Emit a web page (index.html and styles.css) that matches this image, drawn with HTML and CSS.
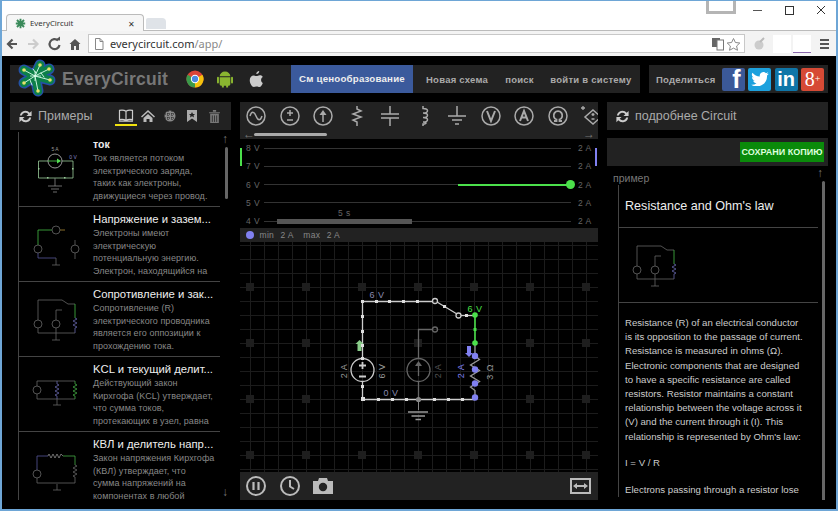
FILE: index.html
```html
<!DOCTYPE html>
<html lang="ru">
<head>
<meta charset="utf-8">
<title>EveryCircuit</title>
<link rel="stylesheet" href="styles.css">
</head>
<body>
<svg class="defs" width="0" height="0">
  <defs>
    <g id="th-current" fill="none" stroke="#888" stroke-width=".8">
      <path d="M13 21H3.500V38H38V21H27" stroke="#9c9"/>
      <circle cx="20" cy="21" r="7" stroke="#bbb"/>
      <path d="M13 21H25" stroke="#5d5"/><path d="M22 18.500l4 2.500-4 2.500z" fill="#5d5" stroke="none"/>
      <path d="M20 38V46M13 46H27M16 49H24M18 52H22"/>
      <g fill="#9c9" stroke="none"><rect x="3" y="28" width="1.500" height="1.500"/><rect x="12" y="37" width="1.500" height="1.500"/><rect x="29" y="37" width="1.500" height="1.500"/><rect x="37" y="28" width="1.500" height="1.500"/></g>
      <text x="20" y="11" class="th-t">5 A</text><text x="38" y="19" class="th-t blue">0 V</text>
    </g>
    <g id="th-volt" fill="none" stroke="#666" stroke-width=".8">
      <path d="M3 30V15H17" stroke="#4b4"/><path d="M25 15H30" stroke="#a83"/>
      <circle cx="21" cy="15" r="4"/><circle cx="3" cy="34" r="4"/><circle cx="40" cy="34" r="4"/>
      <path d="M3 38V43H21" stroke="#559"/><path d="M21 43V50M17 50H25"/>
      <path d="M40 25V30M40 38V44"/>
    </g>
    <g id="th-res" fill="none" stroke="#666" stroke-width=".8">
      <path d="M3 30V10H27L33 14H40"/>
      <path d="M40 14V28" stroke="#4b4"/>
      <path d="M27 20H21V30"/>
      <circle cx="3" cy="34" r="4"/><circle cx="21" cy="34" r="4"/>
      <path d="M40 28l2 1-4 2 4 2-4 2 4 2-2 1v5" stroke="#66a"/>
      <path d="M3 38V43H40M21 38V50M17 50H25"/>
    </g>
    <g id="th-kcl" fill="none" stroke="#666" stroke-width=".8">
      <path d="M2 21V16H40M2 29V34H40M22 34V40M18 40H26"/>
      <circle cx="2" cy="25" r="4"/>
      <path d="M22 16v3l2 1-4 2 4 2-4 2 4 2-4 2 2 1v3" stroke="#66a"/>
      <path d="M40 16v3l2 1-4 2 4 2-4 2 4 2-4 2 2 1v3" stroke="#4a4"/>
    </g>
    <g id="th-kvl" fill="none" stroke="#666" stroke-width=".8">
      <path d="M2 30V16H13" stroke="#559"/>
      <path d="M13 16l1-2 2 4 2-4 2 4 2-4 2 4 2-4 2 2" stroke="#888"/>
      <path d="M28 16H40V25" stroke="#4a4"/>
      <path d="M40 25l2 1-4 2 4 2-4 2 4 2-4 2 2 1v6H2V38M22 44V50M18 50H26"/>
      <circle cx="2" cy="34" r="4"/>
    </g>
    <path id="refresh-shape" d="M2 7a6 6 0 0 1 10.500-3L14.500 2v5.500H9l2-2A4 4 0 0 0 4 7zM14 9a6 6 0 0 1-10.500 3L1.500 14V8.500H7l-2 2A4 4 0 0 0 12 9z" fill="#ccc"/>
  </defs>
</svg>
<div class="window">
  <div class="tabstrip">
    <div class="tab">
      <svg class="favicon" viewBox="0 0 14 14"><circle cx="7" cy="7" r="3" fill="#3a8a5a"/><path d="M7 1v12M1 7h12M2.500 2.500l9 9M11.500 2.500l-9 9" stroke="#3a8a5a" stroke-width="2.400"/></svg>
      <span class="tab-title">EveryCircuit</span>
      <span class="tab-close">✕</span>
    </div>
    <div class="newtab"></div>
    <div class="winbtns">
      <div class="ghost"></div>
      <svg class="wincontrols" viewBox="0 0 100 14" width="100" height="14">
        <path d="M17 7.500H26" stroke="#555"/>
        <rect x="49.500" y="3.500" width="8" height="8" fill="none" stroke="#333"/>
        <path d="M81 3l8 8M89 3l-8 8" stroke="#333"/>
      </svg>
    </div>
  </div>
  <div class="toolbar">
    <svg class="navicons" viewBox="0 0 72 16" width="72" height="16">
      <path d="M-1 8H8M3.500 3.500L-1 8l4.500 4.500" fill="none" stroke="#555" stroke-width="2.200"/>
      <path d="M19 8H28M24 3.500L28.500 8 24 12.500" fill="none" stroke="#ccc" stroke-width="2.200"/>
      <g transform="translate(-5 0)"><path d="M54 4.500A5 5 0 1 0 55.500 9" fill="none" stroke="#555" stroke-width="2.200"/><path d="M51 4l5 .500 0-4z" fill="#555"/></g>
      <path d="M60.500 8l5.500-5 5.500 5H70v6h-3v-4h-2v4h-3V8z" fill="#555"/>
    </svg>
    <div class="urlbox">
      <svg class="pageicon" viewBox="0 0 10 12" width="10" height="12"><path d="M1.500.5h4.500l3 3v8h-7.500zM6 .5v3h3" fill="#fff" stroke="#888"/></svg>
      <span class="url"><span class="host">everycircuit.com</span>/app/</span>
      <svg class="translate" viewBox="0 0 32 14" width="32" height="14">
        <rect x="3" y="1" width="8" height="9" fill="#666"/><rect x="8" y="3" width="6.500" height="10" fill="#fff" stroke="#777"/>
        <path d="M24.500 1.500l1.900 4 4.400.5-3.200 3 .9 4.300-4-2.200-4 2.200.9-4.300-3.200-3 4.400-.5z" fill="#fff" stroke="#888"/>
      </svg>
    </div>
    <div class="exts">
      <svg viewBox="0 0 14 14" width="14" height="14"><circle cx="6" cy="8" r="4.500" fill="#ccc"/><path d="M7 5l4-4" stroke="#bbb" stroke-width="2"/></svg>
      <span class="ext-white"></span>
      <span class="ext-white ext-line"></span>
      <span class="burger"><i></i><i></i><i></i></span>
    </div>
  </div>

  <div class="app">
    <header class="topbar">
      <div class="brandbar">
        <svg class="logo" viewBox="0 0 38 38" width="38" height="38">
          <g stroke-linecap="round" fill="none">
            <path d="M18 16L23 5M18 16L7 10M18 16L32 9M18 16L33 20M18 16L7 23M18 16L21 31" stroke="#2450a8" stroke-width="11"/>
            <path d="M18 16L23 5M18 16L7 10M18 16L32 9M18 16L33 20M18 16L7 23M18 16L21 31" stroke="#0d8048" stroke-width="8"/>
            <path d="M18 16L23 5M18 16L7 10M18 16L32 9M18 16L33 20M18 16L7 23M18 16L21 31M13 20L15 25M24 13L27 17M16 9L19 13" stroke="#dfe" stroke-width=".9"/>
          </g>
          <path d="M13 16H24M18 11V21" stroke="#dfe" stroke-width=".8"/>
          <g fill="#e6e36b"><circle cx="23" cy="5" r="1.800"/><circle cx="7" cy="10" r="1.800"/><circle cx="32" cy="9" r="1.800"/><circle cx="33" cy="20" r="1.800"/><circle cx="7" cy="23" r="1.800"/><circle cx="21" cy="31" r="1.800"/></g>
        </svg>
        <span class="brand">EveryCircuit</span>
        <svg class="plat plat-chrome" viewBox="0 0 20 20" width="18" height="18">
          <circle cx="10" cy="10" r="9.500" fill="#db4437"/>
          <path d="M10 10L18.200 5.200A9.500 9.500 0 0 1 10 19.500z" fill="#f4c20d"/>
          <path d="M10 10L10 19.500A9.500 9.500 0 0 1 1.800 5.200z" fill="#3a9a4a"/>
          <circle cx="10" cy="10" r="4.600" fill="#fff"/><circle cx="10" cy="10" r="3.500" fill="#4a88e0"/>
        </svg>
        <svg class="plat plat-android" viewBox="0 0 18 20" width="16" height="18">
          <path d="M3 7a6 5.500 0 0 1 12 0zM3 8h12v8a1.500 1.500 0 0 1-1.500 1.500H4.500A1.500 1.500 0 0 1 3 16zM0 8.500a1 1 0 0 1 2.200 0V14a1 1 0 0 1-2.200 0zM15.800 8.500a1 1 0 0 1 2.200 0V14a1 1 0 0 1-2.200 0zM5.500 17h2.200v2.500H5.500zM10.300 17h2.200v2.500h-2.200z" fill="#8ab630"/>
        </svg>
        <svg class="plat plat-apple" viewBox="0 0 16 20" width="15" height="18">
          <path d="M11 1c.2 1.800-1.500 3.600-3.200 3.400C7.600 2.800 9.200 1.100 11 1zM15 14.500c-.8 2-2.200 4.500-3.700 4.500-1.200 0-1.600-.7-3.100-.7s-2 .7-3.100.7C3 19 .5 15 .5 11.500.500 8 2.700 6 4.900 6c1.300 0 2.400.8 3.200.8.800 0 2-.9 3.500-.9 1.100 0 2.500.5 3.400 1.800-2.800 1.700-2.300 5.600 0 6.800z" fill="#ccc"/>
        </svg>
        <a class="cta">См ценообразование</a>
        <a class="nav nav-new">Новая схема</a>
        <a class="nav nav-search">поиск</a>
        <a class="nav nav-login">войти в систему</a>
      </div>
      <div class="sharebar">
        <span class="nav share-label">Поделиться</span>
        <span class="soc fb">f</span>
        <span class="soc tw"><svg viewBox="0 0 20 16" width="18" height="14"><path d="M20 2c-.7.300-1.500.5-2.400.6.900-.5 1.500-1.300 1.800-2.200-.8.500-1.700.8-2.600 1A4.100 4.100 0 0 0 9.800 5.100 11.600 11.600 0 0 1 1.400.8 4.100 4.100 0 0 0 2.700 6.300c-.7 0-1.300-.2-1.900-.5 0 2 1.400 3.700 3.300 4.100-.6.200-1.200.2-1.900.1.500 1.600 2 2.800 3.800 2.800A8.200 8.200 0 0 1 0 14.500 11.600 11.600 0 0 0 18 4.100c.8-.5 1.500-1.300 2-2.100z" fill="#fff"/></svg></span>
        <span class="soc li">in</span>
        <span class="soc gp">8<sup>+</sup></span>
      </div>
    </header>

    <div class="columns">
      <aside class="leftcol">
        <div class="panelhead">
          <svg class="refresh" viewBox="0 0 16 16" width="15" height="15"><use href="#refresh-shape"/></svg>
          <span class="panel-title">Примеры</span>
          <div class="tabsicons">
            <span class="ti ti-on"><svg viewBox="0 0 16 14" width="16" height="13"><path d="M8 2.500C6 1 3 1 1 1.500v10C3 11 6 11 8 12.500c2-1.500 5-1.500 7-1V1.500C13 1 10 1 8 2.500zM8 2.500v10M.5 13h15" fill="none" stroke="#ccc" stroke-width="1.300"/></svg></span>
            <span class="ti"><svg viewBox="0 0 14 12" width="14" height="12"><path d="M7 0L0 6.500l1 1L7 2l6 5.500 1-1zM2.500 8L7 4l4.500 4v4H8.500V9h-3v3h-3z" fill="#bbb"/></svg></span>
            <span class="ti"><svg viewBox="0 0 12 12" width="12" height="12"><circle cx="6" cy="6" r="5.500" fill="#888"/><path d="M1 4h10M1 8h10M4 1v10M8 1v10" stroke="#222" stroke-dasharray="1 1"/></svg></span>
            <span class="ti"><svg viewBox="0 0 10 12" width="10" height="12"><path d="M0 0h10v12L5 8.500 0 12z" fill="#aaa"/><path d="M5 2l1 2h2L6.500 5.500 7 7.500 5 6.300 3 7.500l.5-2L2 4h2z" fill="#222"/></svg></span>
            <span class="ti"><svg viewBox="0 0 10 12" width="11" height="13"><path d="M0 2h10v1H0zM3.500 0h3v1.500h-3zM1 3.500h8V12H1z" fill="#777"/><path d="M3 5v6M5 5v6M7 5v6" stroke="#222" stroke-width=".7"/></svg></span>
          </div>
        </div>
        <div class="examples">
          <article class="ex ex-first">
            <svg class="thumb" viewBox="0 0 44 56"><use href="#th-current"/></svg>
            <div class="ex-text"><h3 class="ex-title ex-cut">ток</h3><p class="ex-desc">Ток является потоком электрического заряда, таких как электроны, движущиеся через провод.</p></div>
          </article>
          <article class="ex">
            <svg class="thumb" viewBox="0 0 44 56"><use href="#th-volt"/></svg>
            <div class="ex-text"><h3 class="ex-title">Напряжение и зазем...</h3><p class="ex-desc">Электроны имеют электрическую потенциальную энергию. Электрон, находящийся на</p></div>
          </article>
          <article class="ex">
            <svg class="thumb" viewBox="0 0 44 56"><use href="#th-res"/></svg>
            <div class="ex-text"><h3 class="ex-title">Сопротивление и зак...</h3><p class="ex-desc">Сопротивление (R) электрического проводника является его оппозиции к прохождению тока.</p></div>
          </article>
          <article class="ex">
            <svg class="thumb" viewBox="0 0 44 56"><use href="#th-kcl"/></svg>
            <div class="ex-text"><h3 class="ex-title">KCL и текущий делит...</h3><p class="ex-desc">Действующий закон Кирхгофа (KCL) утверждает, что сумма токов, протекающих в узел, равна</p></div>
          </article>
          <article class="ex ex-last">
            <svg class="thumb" viewBox="0 0 44 56"><use href="#th-kvl"/></svg>
            <div class="ex-text"><h3 class="ex-title">КВЛ и делитель напр...</h3><p class="ex-desc">Закон напряжения Кирхгофа (КВЛ) утверждает, что<br>сумма напряжений на<br>компонентах в любой</p></div>
          </article>
          <span class="sb-up">↑</span>
          <span class="sb-thumb"></span>
          <span class="sb-down">↓</span>
        </div>
      </aside>

      <main class="centercol">
        <div class="palette">
          <svg viewBox="0 0 20 20" class="pi"><circle cx="10" cy="10" r="9"/><path d="M4 10c1.500-5 4-5 6 0s4.500 5 6 0"/></svg>
          <svg viewBox="0 0 20 20" class="pi"><circle cx="10" cy="10" r="9"/><path d="M10 4v6M7 7h6M7 14h6"/></svg>
          <svg viewBox="0 0 20 20" class="pi"><circle cx="10" cy="10" r="9"/><path d="M10 16V6"/><path d="M6.500 9L10 4l3.500 5z" class="pf"/></svg>
          <svg viewBox="0 0 20 20" class="pi"><path d="M10 0v3l4 2-8 3 8 3-8 3 4 2v4"/></svg>
          <svg viewBox="0 0 20 20" class="pi"><path d="M10 0v8M1 8h18M1 12h18M10 12v8"/></svg>
          <svg viewBox="0 0 20 20" class="pi"><path d="M9 0v2.500c6 0 6 4.500 0 4.500 6 0 6 4.500 0 4.500 6 0 6 4.500 0 4.500 4 0 4 2 0 2V20"/></svg>
          <svg viewBox="0 0 20 20" class="pi"><path d="M10 0v10M1 10h18M5 14h10M8 18h4"/></svg>
          <svg viewBox="0 0 20 20" class="pi"><circle cx="10" cy="10" r="9"/><path d="M6 5l4 10 4-10" stroke-width="2"/></svg>
          <svg viewBox="0 0 20 20" class="pi"><circle cx="10" cy="10" r="9"/><path d="M6 15l4-10 4 10M7.500 11.500h5" stroke-width="2"/></svg>
          <svg viewBox="0 0 20 20" class="pi"><circle cx="10" cy="10" r="9"/><path d="M6 15h2.500v-1.500a4.300 4.300 0 1 1 3 0V15H14" stroke-width="1.800"/></svg>
          <svg viewBox="0 0 20 20" class="pi"><path d="M12 4l8 7-8 7-8-7z"/><path d="M12 7v3M10.500 8.500h3M10.500 13h3M0 2h4M2 0v4" stroke-width="1.300"/></svg>
        </div>
        <div class="hscroll"><span class="harrow">←</span><span class="hthumb"></span><span class="harrow harrow-r">→</span></div>
        <div class="scope">
          <span class="marker marker-g"></span>
          <span class="marker marker-b"></span>
          <div class="srow"><span class="sl">8 V</span><span class="sline"></span><span class="sr">2 A</span></div>
          <div class="srow"><span class="sl">7 V</span><span class="sline"></span><span class="sr">2 A</span></div>
          <div class="srow"><span class="sl">6 V</span><span class="sline"><i class="trace"></i><b class="tracedot"></b></span><span class="sr">2 A</span></div>
          <div class="srow"><span class="sl">5 V</span><span class="sline"></span><span class="sr">2 A</span></div>
          <div class="srow"><span class="sl">4 V</span><span class="sline"><i class="timebar"></i><em class="timelabel">5 s</em></span><span class="sr">2 A</span></div>
        </div>
        <div class="legend"><span class="dot"></span><span>min</span><span>2 A</span><span class="gap">max</span><span>2 A</span></div>
        <div class="canvas">
          <svg class="circuit" viewBox="240 242 358 230" width="358" height="230">
            <g fill="#1e1e1e">
              <rect x="246" y="283" width="8" height="8"/><rect x="302" y="283" width="8" height="8"/><rect x="358" y="283" width="8" height="8"/><rect x="414" y="283" width="8" height="8"/><rect x="470" y="283" width="8" height="8"/><rect x="526" y="283" width="8" height="8"/><rect x="582" y="283" width="8" height="8"/>
              <rect x="246" y="339" width="8" height="8"/><rect x="302" y="339" width="8" height="8"/><rect x="414" y="339" width="8" height="8"/><rect x="526" y="339" width="8" height="8"/><rect x="582" y="339" width="8" height="8"/>
              <rect x="246" y="395" width="8" height="8"/><rect x="302" y="395" width="8" height="8"/><rect x="526" y="395" width="8" height="8"/><rect x="582" y="395" width="8" height="8"/>
              <rect x="246" y="451" width="8" height="8"/><rect x="302" y="451" width="8" height="8"/><rect x="358" y="451" width="8" height="8"/><rect x="414" y="451" width="8" height="8"/><rect x="470" y="451" width="8" height="8"/><rect x="526" y="451" width="8" height="8"/><rect x="582" y="451" width="8" height="8"/>
            </g>
            <g fill="none" stroke="#ccc" stroke-width="1.300">
              <path d="M362.500 358V301.500H433"/>
              <path d="M362.500 381V399.500H475"/>
              <path d="M437 302L457 314"/>
              <path d="M461 315.500H475"/>
              <circle cx="435" cy="301" r="2.500"/><circle cx="458.500" cy="315.500" r="2.500"/>
              <circle cx="362.500" cy="370" r="11.500"/>
              <path d="M362.500 362v7M359 365.500h7M359 376.500h7" stroke-width="1.800"/>
            </g>
            <g fill="none" stroke="#666" stroke-width="1.300">
              <circle cx="418.500" cy="370" r="11.500"/>
              <path d="M418.500 358V329.500H432M418.500 381.500V400"/>
              <circle cx="435" cy="329.500" r="2.500"/>
              <path d="M418.500 376v-11"/>
            </g>
            <path d="M415 366l3.500-5 3.500 5z" fill="#666"/>
            <path d="M408 412H428M411.500 416H425M415.500 419.500H421" stroke="#999" stroke-width="1.300"/>
            <path d="M418.500 400V410" stroke="#888"/>
            <path d="M475 315.500V343" stroke="#4be04b" stroke-width="1.600"/>
            <path d="M475 343V356l4.500 3.500-9 5.500 9 5.500-9 5.500 9 5.500-9 5.500 4.500 3.500V399" fill="none" stroke="#999" stroke-width="1.300"/>
            <path d="M357.500 351v-7h-2l4-4 4 4h-2v7z" fill="#8c8"/>
            <path d="M468 337v7h-2l4 4 4-4h-2v-7z" fill="#8080f0" transform="translate(-1 9)"/>
            <g fill="#ddd">
              <rect x="361" y="300" width="3" height="3"/>
              <rect x="375" y="300" width="3" height="3"/><rect x="388" y="300" width="3" height="3"/><rect x="402" y="300" width="3" height="3"/><rect x="416" y="300" width="3" height="3"/>
              <rect x="361" y="315" width="3" height="3"/><rect x="361" y="330" width="3" height="3"/><rect x="361" y="344" width="3" height="3"/>
              <rect x="361" y="357" width="3" height="3"/>
              <rect x="361" y="385" width="3" height="3"/>
              <rect x="361" y="397" width="4" height="4"/>
              <rect x="377" y="398" width="3" height="3"/><rect x="391" y="398" width="3" height="3"/><rect x="405" y="398" width="3" height="3"/><rect x="433" y="398" width="3" height="3"/><rect x="447" y="398" width="3" height="3"/><rect x="461" y="398" width="3" height="3"/>
              <rect x="443" y="305" width="3" height="3"/><rect x="465" y="314" width="3" height="3"/>
            </g>
            <circle cx="418.500" cy="399.500" r="2.600" fill="#888"/>
            <g fill="#4be04b"><circle cx="475" cy="315" r="2.800"/><circle cx="475" cy="343" r="2.800"/><rect x="473.500" y="328" width="3" height="3"/></g>
            <g fill="#8080f0"><circle cx="475" cy="356" r="3.200"/><circle cx="475" cy="369.500" r="3.200"/><circle cx="475" cy="383.500" r="3.200"/><circle cx="475" cy="397.500" r="3.200"/></g>
            <g class="clabel">
              <text x="377" y="298" class="c-blue">6 V</text>
              <text x="475" y="312" class="c-green">6 V</text>
              <text x="391" y="396" class="c-blue">0 V</text>
              <text transform="translate(347 371) rotate(-90)">2 A</text>
              <text transform="translate(385 371) rotate(-90)">6 V</text>
              <text transform="translate(441 371) rotate(-90)" class="c-dim">2 A</text>
              <text transform="translate(464 371) rotate(-90)" class="c-vio">2 A</text>
              <text transform="translate(493 372) rotate(-90)">3 Ω</text>
            </g>
          </svg>
        </div>
        <div class="controls">
          <svg viewBox="0 0 20 20" class="ci"><circle cx="10" cy="10" r="9"/><path d="M7.500 6v8M12.500 6v8" stroke-width="2.200"/></svg>
          <svg viewBox="0 0 20 20" class="ci"><circle cx="10" cy="10" r="9"/><path d="M10 4v6.500l4 2.500" stroke-width="2"/></svg>
          <svg viewBox="0 0 20 16" class="ci ci-cam"><path d="M0 3h5l1-3h8l1 3h5v13H0z" fill="#bbb" stroke="none"/><circle cx="10" cy="9" r="4.200" fill="#222" stroke="none"/></svg>
          <svg viewBox="0 0 21 16" class="ci ci-fit"><rect x="1" y="1" width="19" height="14" stroke-width="2"/><path d="M3 8l4-3v2h7V5l4 3-4 3V9H7v2z" fill="#bbb" stroke="none"/></svg>
        </div>
      </main>

      <aside class="rightcol">
        <div class="panelhead">
          <svg class="refresh" viewBox="0 0 16 16" width="15" height="15"><use href="#refresh-shape"/></svg>
          <span class="panel-title">подробнее Circuit</span>
        </div>
        <div class="savebar"><a class="save">СОХРАНИ КОПИЮ</a></div>
        <div class="detail">
          <div class="detail-label">пример</div>
          <div class="detail-body">
            <h2 class="detail-title">Resistance and Ohm's law</h2>
            <div class="detail-thumb"><svg class="thumb thumb-detail" viewBox="0 0 44 56"><use href="#th-res"/></svg></div>
            <div class="detail-text">
              <p>Resistance (R) of an electrical conductor is its opposition to the passage of current. Resistance is measured in ohms (Ω). Electronic components that are designed to have a specific resistance are called resistors. Resistor maintains a constant relationship between the voltage across it (V) and the current through it (I). This relationship is represented by Ohm's law:</p>
              <p>I = V / R</p>
              <p>Electrons passing through a resistor lose</p>
            </div>
          </div>
          <span class="sb-up">↑</span>
          <span class="sb-thumb sb-thumb-r"></span>
        </div>
      </aside>
    </div>
  </div>
</div>
</body>
</html>
```
FILE: styles.css
```css
* { box-sizing: border-box; }
html, body { margin: 0; padding: 0; }
body { width: 838px; height: 511px; overflow: hidden; font-family: "Liberation Sans", Arial, sans-serif; background: #fff; }
.defs { position: absolute; }
.window { width: 838px; height: 511px; display: flex; flex-direction: column; border: 1px solid #6ea6d6; border-width: 1px 2px 2px 2px; overflow: hidden; }

.tabstrip { height: 30px; flex: none; display: flex; align-items: flex-end; background: #fff; padding-left: 4px; border-bottom: 1px solid #bbb; position: relative; }
.tab { width: 138px; height: 17px; background: #f6f6f6; border: 1px solid #bbb; border-bottom: 0; border-radius: 4px 4px 0 0; display: flex; align-items: center; padding: 0 8px; gap: 4px; color: #333; margin-bottom: -1px; font-family: "Noto Sans", sans-serif; }
.favicon { width: 11px; height: 11px; flex: none; }
.tab-title { flex: 1; font-size: 7.800px; }
.tab-close { font-size: 8px; color: #333; }
.newtab { width: 20px; height: 11px; background: #dfe3e8; border-radius: 2px 4px 0 0; margin-left: 2px; margin-bottom: 1px; }
.winbtns { position: absolute; right: 0; top: 0; display: flex; align-items: flex-start; }
.ghost { width: 30px; height: 14px; background: #fff; border: 3px solid #b5b5b5; border-top: 0; margin-top: -1px; }
.wincontrols { margin-top: 2px; }

.toolbar { height: 25px; flex: none; display: flex; align-items: center; background: #f3f3f3; padding-left: 7px; }
.navicons { flex: none; margin-right: 7px; overflow: visible; }
.urlbox { flex: none; width: 657px; height: 19px; background: #fff; border: 1px solid #c8c8c8; display: flex; align-items: center; padding: 0 1px 0 5px; font: 11px "Noto Sans", sans-serif; color: #888; }
.pageicon { flex: none; margin-right: 6px; }
.url { flex: 1; }
.host { color: #333; }
.translate { flex: none; margin-right: 2px; }
.exts { display: flex; align-items: center; margin-left: 8px; }
.ext-white { width: 18px; height: 18px; background: #fff; margin-left: 6px; }
.ext-white.ext-line { margin-left: 2px; border-bottom: 1px solid #86a; }
.burger { width: 9px; margin-left: 9px; display: flex; flex-direction: column; gap: 2px; }
.burger i { display: block; height: 2px; background: #555; }

.app { flex: 1; min-height: 0; background: #000; padding: 9px 8px 0; display: flex; flex-direction: column; gap: 9px; }
.topbar { flex: none; height: 28px; display: flex; gap: 9px; }
.brandbar { width: 630px; background: #222; display: flex; align-items: center; }
.sharebar { flex: 1; background: #222; display: flex; align-items: center; padding-left: 7px; gap: 3.500px; }
.logo { flex: none; margin: -5px 7px -5px 7px; overflow: visible; }
.brand { font-size: 17.500px; font-weight: bold; color: #777; width: 124px; letter-spacing: .25px; flex: none; }
.plat { flex: none; }
.plat-chrome { margin-right: 13px; }
.plat-android { margin-right: 15.500px; }
.plat-apple { margin-right: 27.500px; }
.cta { flex: none; width: 122px; height: 28px; line-height: 27px; background: #3b5a9c; color: #eee; font-weight: bold; font-size: 9.700px; text-align: center; letter-spacing: .2px; white-space: nowrap; }
.nav { color: #aaa; font-weight: bold; font-size: 9.500px; letter-spacing: .25px; white-space: nowrap; }
.nav-new { margin-left: 13px; }
.nav-search { margin-left: 17px; }
.nav-login { margin-left: 16.500px; }
.share-label { margin-right: 2.500px; }
.soc { width: 23px; height: 23px; border-radius: 2px; color: #fff; font-weight: bold; display: flex; align-items: center; justify-content: center; font-size: 21px; flex: none; }
.fb { background: #3b5998; font-size: 25px; line-height: 23px; justify-content: flex-end; padding-right: 4px; }
.tw { background: #1da1dd; }
.li { background: #0f76a8; font-size: 20px; }
.gp { background: #d64a35; font: 20px "Liberation Serif", serif; }
.gp sup { font-size: 10px; line-height: 0; }

.columns { flex: 1; min-height: 0; display: flex; gap: 9px; }
.leftcol { width: 221px; flex: none; display: flex; flex-direction: column; }
.centercol { width: 358px; flex: none; display: flex; flex-direction: column; }
.rightcol { width: 221px; flex: none; display: flex; flex-direction: column; }
.panelhead { flex: none; height: 28px; background: #222; display: flex; align-items: center; padding-left: 8px; color: #aaa; font-size: 12.500px; }
.refresh { flex: none; margin-right: 5px; }
.panel-title { white-space: nowrap; }
.tabsicons { display: flex; align-items: center; margin-left: 23px; }
.ti { display: flex; align-items: center; justify-content: center; width: 22px; flex: none; }
.ti-on { border-bottom: 2px solid #f1e20e; padding-bottom: 2px; margin-bottom: -3px; }

.examples { flex: 1; min-height: 0; position: relative; overflow: hidden; margin-top: 2px; margin-left: 8px; border-left: 1px solid #444; margin-bottom: 9px; }
.ex { height: 75px; width: 201px; border-bottom: 1px solid #444; display: flex; padding-left: 16px; }
.ex-last { border-bottom: 0; }
.thumb { flex: none; width: 44px; height: 56px; margin-top: 8px; overflow: visible; }
.ex-text { margin-left: 14px; width: 123px; padding-top: 2px; }
.ex-title { margin: 0; font-size: 11.300px; font-weight: normal; line-height: 20px; color: #eee; white-space: nowrap; }
.ex-cut { font-weight: bold; font-size: 10.500px; }
.ex-desc { margin: -2px 0 0; font-size: 9px; line-height: 12.600px; color: #888; letter-spacing: .05px; }
.th-t { font-size: 5px; fill: #999; stroke: none; text-anchor: middle; }
.th-t.blue { fill: #88c; }
.sb-up, .sb-down { position: absolute; color: #777; font-size: 12px; width: 12px; text-align: center; line-height: 12px; }
.sb-up { top: 1px; }
.sb-down { bottom: 2px; }
.examples .sb-up, .examples .sb-down { left: 200px; }
.sb-thumb { position: absolute; left: 206px; top: 15px; width: 3px; height: 52px; background: #666; border-radius: 2px; }

.palette { flex: none; height: 28px; background: #222; display: flex; align-items: center; gap: 13.500px; padding-left: 6px; overflow: hidden; }
.pi { flex: none; width: 20px; height: 20px; fill: none; stroke: #aaa; stroke-width: 1.500; overflow: visible; }
.pf { fill: #aaa; stroke: none; }
.hscroll { flex: none; height: 9px; background: #222; display: flex; align-items: center; color: #777; font-size: 12px; position: relative; padding: 0 3px; }
.harrow { line-height: 9px; }
.harrow-r { margin-left: auto; }
.hthumb { position: absolute; left: 14px; width: 73px; height: 3px; background: #aaa; border-radius: 2px; }
.scope { flex: none; height: 89px; display: flex; flex-direction: column; position: relative; }
.srow { height: 18.250px; flex: none; display: flex; align-items: center; color: #666; font-size: 8.500px; letter-spacing: .4px; }
.sl { width: 20px; text-align: right; margin-right: 4px; flex: none; }
.sr { width: 20px; margin-left: 7px; flex: none; }
.sline { flex: 1; height: 1px; background: #333; position: relative; }
.trace { position: absolute; right: 0; top: -.5px; width: 113px; height: 2px; background: #4be04b; }
.tracedot { position: absolute; right: -4px; top: -4px; width: 9px; height: 9px; border-radius: 50%; background: #4be04b; }
.timebar { position: absolute; left: 13px; top: -2px; width: 135px; height: 5px; background: #555; }
.timelabel { position: absolute; left: 74px; top: -13px; font-style: normal; }
.marker { position: absolute; width: 2px; height: 18px; top: 9px; }
.marker-g { left: 0; background: #4be04b; }
.marker-b { right: 1px; background: #8080f0; }
.legend { flex: none; height: 14px; background: #222; display: flex; align-items: center; gap: 6.500px; padding-left: 6px; color: #888; font-size: 8.500px; letter-spacing: .3px; }
.dot { width: 8px; height: 8px; border-radius: 50%; background: #8080f0; margin-right: -1px; }
.gap { margin-left: 3px; }
.canvas { flex: none; height: 230px; background-color: #000; background-image: linear-gradient(#1c1c1c 1px, transparent 1px), linear-gradient(90deg, #1c1c1c 1px, transparent 1px); background-size: 14px 14px; background-position: 10px 3px; }
.circuit { display: block; }
.clabel text { font-size: 9px; fill: #999; text-anchor: middle; letter-spacing: .5px; }
.clabel .c-blue { fill: #8a8ab0; }
.clabel .c-green { fill: #4be04b; }
.clabel .c-dim { fill: #555; }
.clabel .c-vio { fill: #8080f0; }
.controls { flex: none; height: 28px; background: #222; display: flex; align-items: center; gap: 13.500px; padding: 0 7px 0 6px; }
.ci { flex: none; width: 20px; height: 20px; fill: none; stroke: #bbb; stroke-width: 2; }
.ci-fit { margin-left: auto; width: 21px; height: 16px; }

.savebar { flex: none; height: 28px; background: #222; margin-top: 8px; display: flex; justify-content: flex-end; align-items: center; padding-right: 4px; }
.save { width: 84px; height: 20px; line-height: 20px; background: #0a8a0a; color: #dfd; font-size: 9px; font-weight: bold; text-align: center; white-space: nowrap; }
.detail { flex: 1; min-height: 0; position: relative; overflow: hidden; margin-bottom: 9px; }
.detail-label { font-size: 10.500px; color: #777; padding: 6px 0 0 6px; height: 19px; line-height: 13px; }
.detail-body { margin-left: 11px; border-left: 1px solid #444; width: 200px; }
.detail-title { margin: 0; height: 43px; line-height: 43px; padding-left: 6px; font-size: 12.600px; font-weight: normal; color: #eee; border-bottom: 1px solid #444; }
.detail-thumb { height: 75px; border-bottom: 1px solid #444; padding-left: 15px; }
.thumb-detail { margin-top: 8px; }
.detail-text { padding: 13px 0 0 6px; font-size: 9.650px; line-height: 14.200px; color: #ccc; width: 188px; }
.detail-text p { margin: 0 0 12.500px; }
.detail .sb-up { right: 2px; top: 1px; }
.sb-thumb-r { left: 215px; top: 15px; height: 335px; }
```
